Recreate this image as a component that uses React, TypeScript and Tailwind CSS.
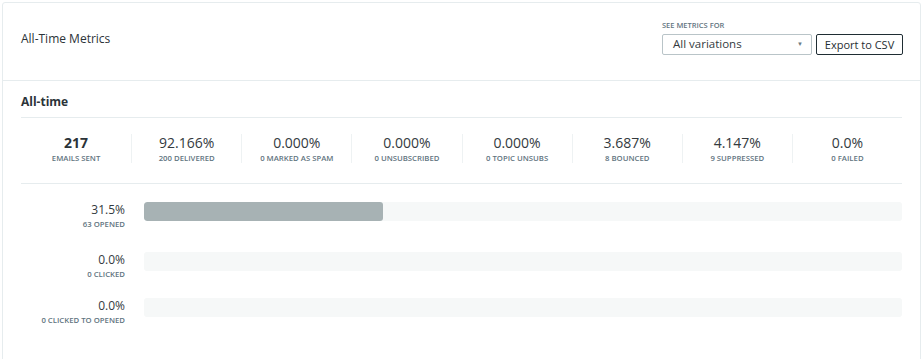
import React from "react";

const stats = [
  { value: "217", label: "EMAILS SENT", bold: true },
  { value: "92.166%", label: "200 DELIVERED" },
  { value: "0.000%", label: "0 MARKED AS SPAM" },
  { value: "0.000%", label: "0 UNSUBSCRIBED" },
  { value: "0.000%", label: "0 TOPIC UNSUBS" },
  { value: "3.687%", label: "8 BOUNCED" },
  { value: "4.147%", label: "9 SUPPRESSED" },
  { value: "0.0%", label: "0 FAILED" },
];

const bars = [
  { pct: "31.5%", label: "63 OPENED", width: 31.5, mt: "mt-[18px]" },
  { pct: "0.0%", label: "0 CLICKED", width: 0, mt: "mt-[22px]" },
  { pct: "0.0%", label: "0 CLICKED TO OPENED", width: 0, mt: "mt-[18px]" },
];

export default function App() {
  return (
    <div className="min-h-screen bg-white p-[2px] font-['Open_Sans',sans-serif] text-[#333a3e]">
      <div className="border border-[#e6ecee] rounded-[3px] bg-white h-[400px]">
        {/* header */}
        <div className="flex justify-between items-center h-[78px] pl-[18px] pr-[17px] border-b border-[#e6ecee]">
          <div className="text-[12px] text-[#2b3338] mt-[-5px]">All-Time Metrics</div>
          <div className="flex flex-col mt-[-10px]">
            <div className="text-[7.5px] font-semibold text-[#5f7480] leading-[12px] mb-[3px]">SEE METRICS FOR</div>
            <div className="flex gap-[4px]">
              <div className="w-[150px] h-[21px] border border-[#b9c4c8] rounded-[2px] flex items-center justify-between pl-[10px] pr-[8px] text-[11.5px] text-[#333a3e]">
                <span>All variations</span>
                <span className="text-[6px] text-[#6b7b83]">▼</span>
              </div>
              <button className="w-[87px] h-[21px] border border-[#1f2d33] rounded-[2px] text-[11px] text-[#1f2d33] bg-white leading-none">
                Export to CSV
              </button>
            </div>
          </div>
        </div>

        {/* body */}
        <div className="px-[18px]">
          <div className="h-[37px] flex items-end pb-[6px] border-b border-[#e6ecee] text-[12px] font-bold text-[#2b3338]">
            All-time
          </div>

          {/* stats */}
          <div className="grid grid-cols-8 h-[66px] border-b border-[#e6ecee] pt-[16px]">
            {stats.map((s, i) => (
              <div
                key={s.label}
                className={`flex flex-col items-center h-[29px] ${i > 0 ? "border-l border-[#eef2f3]" : ""}`}
              >
                <div className={`text-[14px] leading-[17px] ${s.bold ? "font-bold text-[#2b3338]" : "text-[#333a3e]"}`}>
                  {s.value}
                </div>
                <div className="text-[7.75px] font-semibold leading-[12px] text-[#5f7480] mt-[1px]">{s.label}</div>
              </div>
            ))}
          </div>

          {/* bars */}
          {bars.map((b) => (
            <div key={b.label} className={`flex ${b.mt}`}>
              <div className="w-[104px] flex flex-col items-end">
                <div className="text-[12px] leading-[15px] text-[#333a3e]">{b.pct}</div>
                <div className="text-[7.75px] font-semibold leading-[12px] text-[#5f7480] mt-[1px]">{b.label}</div>
              </div>
              <div className="flex-1 ml-[19px] h-[19px] rounded-[3px] bg-[#f6f8f8] overflow-hidden">
                <div className="h-full bg-[#a7b2b4] rounded-[3px]" style={{ width: `${b.width}%` }} />
              </div>
            </div>
          ))}
        </div>
      </div>
    </div>
  );
}
